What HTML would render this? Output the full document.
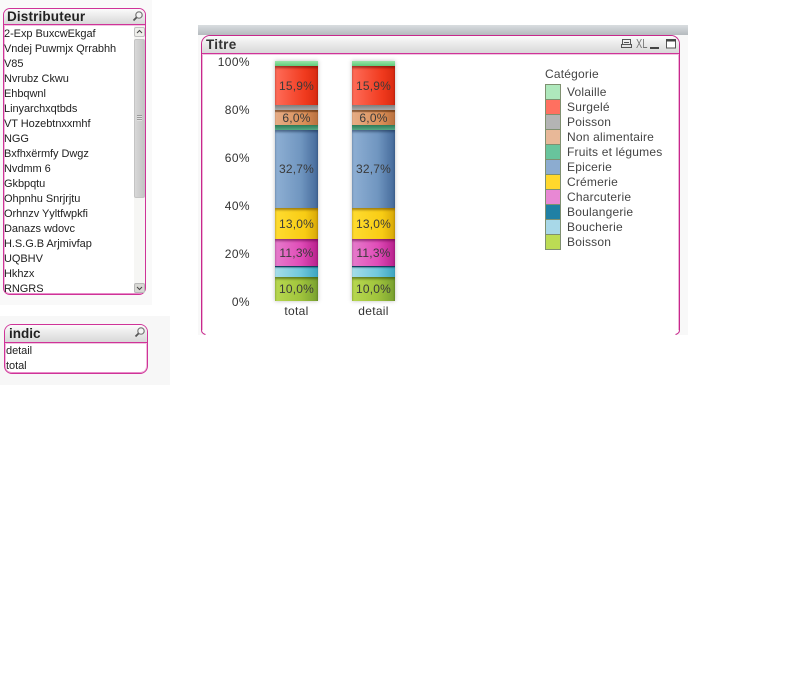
<!DOCTYPE html>
<html><head><meta charset="utf-8">
<style>
html,body{margin:0;padding:0;background:#fff;width:798px;height:675px;overflow:hidden}
body{position:relative;font-family:"Liberation Sans",sans-serif;color:#222}
.a{position:absolute}
.li{position:absolute;left:4px;font-size:11px;line-height:15px;white-space:nowrap;color:#222;letter-spacing:-.05px}
.cap{background:linear-gradient(#fbfbfb,#f0f0f0 30%,#d8d8d8);border-bottom:1px solid #cf3398;box-shadow:0 1px 0 #f0c4e0}
.box{position:absolute;border:1px solid #cf3398;box-sizing:border-box;box-shadow:inset 1px 0 0 #f0bcdc,inset -1px 0 0 #f0bcdc,inset 0 -1px 0 #e88cc8}
.seg{position:absolute;left:0;width:43px;box-sizing:border-box}
.pct{position:absolute;left:0;width:43px;text-align:center;font-size:12px;line-height:14px;color:#3a3a3a;letter-spacing:.2px}
.ax{position:absolute;width:34px;text-align:right;left:216px;font-size:12px;line-height:14px;color:#333;letter-spacing:.4px}
.sw{position:absolute;left:545px;width:16px;height:15px;box-sizing:border-box;border:1px solid #7f9070;border-width:1px 1px 0 1px}
.lg{position:absolute;left:567px;font-size:12px;line-height:14px;color:#444;letter-spacing:.2px;white-space:nowrap}
.bar{position:absolute;top:61px;width:43px;height:240px;box-shadow:0 0 4px rgba(90,90,90,.4)}
</style></head>
<body>
<div class="a" style="left:0;top:0;width:152px;height:305px;background:#f9f9f9"></div>
<div class="a" style="left:0;top:316px;width:170px;height:69px;background:#f7f7f7"></div>
<div class="a" style="left:198px;top:25px;width:490px;height:310px;background:#f8f8f8"></div>
<div class="a" style="left:198px;top:25px;width:490px;height:10px;background:linear-gradient(#d9dde0,#b5babe)"></div>

<!-- Distributeur -->
<div class="box" style="left:3px;top:8px;width:143px;height:287px;border-radius:7px;background:#fff;overflow:hidden">
<div class="cap" style="height:15px"></div>
</div>
<div class="a" style="left:7px;top:9px;font-size:13.5px;font-weight:bold;line-height:16px;color:#222;letter-spacing:.15px">Distributeur</div>
<svg class="a" style="left:131px;top:10px" width="13" height="13" viewBox="0 0 13 13"><circle cx="8" cy="5" r="3.2" fill="#f4f4f4" stroke="#777" stroke-width="1.2"/><path d="M5.600 7.400L2.500 10.500" stroke="#555" stroke-width="1.800"/></svg>
<div class="li" style="top:27px">2-Exp BuxcwEkgaf</div>
<div class="li" style="top:42px">Vndej Puwmjx Qrrabhh</div>
<div class="li" style="top:57px">V85</div>
<div class="li" style="top:72px">Nvrubz Ckwu</div>
<div class="li" style="top:87px">Ehbqwnl</div>
<div class="li" style="top:102px">Linyarchxqtbds</div>
<div class="li" style="top:117px">VT Hozebtnxxmhf</div>
<div class="li" style="top:132px">NGG</div>
<div class="li" style="top:147px">Bxfhxërmfy Dwgz</div>
<div class="li" style="top:162px">Nvdmm 6</div>
<div class="li" style="top:177px">Gkbpqtu</div>
<div class="li" style="top:192px">Ohpnhu Snrjrjtu</div>
<div class="li" style="top:207px">Orhnzv Yyltfwpkfi</div>
<div class="li" style="top:222px">Danazs wdovc</div>
<div class="li" style="top:237px">H.S.G.B Arjmivfap</div>
<div class="li" style="top:252px">UQBHV</div>
<div class="li" style="top:267px">Hkhzx</div>
<div class="li" style="top:282px;height:11px;overflow:hidden">RNGRS</div>
<!-- scrollbar -->
<div class="a" style="left:134px;top:26px;width:11px;height:267px;background:#f6f6f4"></div>
<div class="a" style="left:134px;top:27px;width:11px;height:10px;box-sizing:border-box;border:1px solid #c0c0c0;border-radius:2px;background:#eeeeea"></div>
<svg class="a" style="left:136px;top:29px" width="7" height="6"><path d="M1 4L3.500 1.500L6 4" fill="none" stroke="#444"/></svg>
<div class="a" style="left:134px;top:39px;width:11px;height:159px;box-sizing:border-box;border:1px solid #c4c4c4;border-radius:2px;background:linear-gradient(90deg,#d8d8d8,#c4c4c4)"></div>
<div class="a" style="left:137px;top:115px;width:5px;height:6px;background:repeating-linear-gradient(#9a9a9a 0 1px,#e0e0e0 1px 2px)"></div>
<div class="a" style="left:134px;top:283px;width:11px;height:10px;box-sizing:border-box;border:1px solid #b8b8b8;border-radius:2px;background:#d8d8d4"></div>
<svg class="a" style="left:136px;top:285px" width="7" height="6"><path d="M1 2L3.500 4.500L6 2" fill="none" stroke="#444"/></svg>

<!-- indic -->
<div class="box" style="left:4px;top:324px;width:144px;height:50px;border-radius:8px;background:#fff;overflow:hidden">
<div class="cap" style="height:17px"></div>
</div>
<div class="a" style="left:9px;top:326px;font-size:13.5px;font-weight:bold;line-height:16px;color:#222">indic</div>
<svg class="a" style="left:133px;top:326px" width="13" height="13" viewBox="0 0 13 13"><circle cx="8" cy="5" r="3.2" fill="#f4f4f4" stroke="#777" stroke-width="1.2"/><path d="M5.600 7.400L2.500 10.500" stroke="#555" stroke-width="1.800"/></svg>
<div class="li" style="left:6px;top:344px">detail</div>
<div class="li" style="left:6px;top:359px">total</div>

<!-- chart box -->
<div class="a" style="left:201px;top:35px;width:479px;height:300px;box-sizing:border-box;border:1px solid #c8288c;border-bottom:0;border-radius:9px 9px 0 0;background:#fff;overflow:hidden;box-shadow:inset 1px 0 0 #eeb4d8,inset -1px 0 0 #eeb4d8">
<div class="cap" style="height:17px"></div>
</div>
<div class="a" style="left:201px;top:330px;width:2px;height:5px;background:#f8f8f8"></div>
<div class="a" style="left:678px;top:330px;width:2px;height:5px;background:#f8f8f8"></div>
<svg class="a" style="left:201px;top:329px" width="479" height="6"><path d="M.5 0V1Q.5 4.500 4.500 5.500M478.500 0V1Q478.500 4.500 474.500 5.500" fill="none" stroke="#c8288c"/></svg>
<div class="a" style="left:206px;top:37px;font-size:13.5px;font-weight:bold;line-height:16px;color:#333;letter-spacing:.3px">Titre</div>
<svg class="a" style="left:620px;top:37px" width="60" height="14">
<path d="M2.500 2.500H10.500V7.500H2.500ZM4 5.500H9M1.500 10.500H11.500V7.500H1.500Z" fill="none" stroke="#555"/>
<path d="M30 11H39" stroke="#444" stroke-width="2"/>
<rect x="46.500" y="2.500" width="9" height="8.500" fill="#fff" stroke="#555"/><path d="M46 3.500H56" stroke="#444" stroke-width="2"/>
</svg>
<div class="a" style="left:636px;top:37px;font-size:13px;line-height:14px;color:#777;transform:scaleX(.72);transform-origin:left">XL</div>

<!-- axis -->
<div class="ax" style="top:55px">100%</div>
<div class="ax" style="top:103px">80%</div>
<div class="ax" style="top:151px">60%</div>
<div class="ax" style="top:199px">40%</div>
<div class="ax" style="top:247px">20%</div>
<div class="ax" style="top:295px">0%</div>

<!-- bars -->
<div class="bar" style="left:275px">
<div class="seg" style="top:0;height:5px;background:linear-gradient(#98e4a8,#5fcb7a)"></div>
<div class="seg" style="top:5px;height:39px;background:linear-gradient(90deg,#ff6d5a,#f03a1e 70%,#d82a10);box-shadow:inset 0 2px 2px rgba(90,0,0,.55)"></div>
<div class="seg" style="top:44px;height:5px;background:linear-gradient(#7e7e7e,#a8a8a8)"></div>
<div class="seg" style="top:49px;height:15px;background:linear-gradient(90deg,#e6ad86,#d88d56 70%,#b8703e);box-shadow:inset 0 2px 1px rgba(70,30,0,.55)"></div>
<div class="seg" style="top:64px;height:5px;background:linear-gradient(#2c7a58,#56a884)"></div>
<div class="seg" style="top:69px;height:78px;background:linear-gradient(90deg,#8fb0d4,#7096c0 60%,#44699a);box-shadow:inset 0 2px 2px rgba(20,40,70,.5)"></div>
<div class="seg" style="top:147px;height:31px;background:linear-gradient(90deg,#ffdc30,#f8cc14 70%,#d8a808);box-shadow:inset 0 2px 2px rgba(90,60,0,.55)"></div>
<div class="seg" style="top:178px;height:27px;background:linear-gradient(90deg,#e67ccc,#e04cb8 60%,#b8208c);box-shadow:inset 0 2px 2px rgba(80,0,60,.55)"></div>
<div class="seg" style="top:205px;height:1px;background:#14405e"></div>
<div class="seg" style="top:206px;height:10px;background:linear-gradient(90deg,#a6dde8,#70c8dc 60%,#3ca4c0);box-shadow:inset 0 1px 1px rgba(0,40,60,.4)"></div>
<div class="seg" style="top:216px;height:24px;background:linear-gradient(90deg,#b8d850,#a0c43c 60%,#78a030);box-shadow:inset 0 2px 2px rgba(40,60,0,.55)"></div>
<div class="pct" style="top:18px">15,9%</div>
<div class="pct" style="top:50px">6,0%</div>
<div class="pct" style="top:101px">32,7%</div>
<div class="pct" style="top:156px">13,0%</div>
<div class="pct" style="top:185px">11,3%</div>
<div class="pct" style="top:221px">10,0%</div>
</div>
<div class="bar" style="left:352px">
<div class="seg" style="top:0;height:5px;background:linear-gradient(#98e4a8,#5fcb7a)"></div>
<div class="seg" style="top:5px;height:39px;background:linear-gradient(90deg,#ff6d5a,#f03a1e 70%,#d82a10);box-shadow:inset 0 2px 2px rgba(90,0,0,.55)"></div>
<div class="seg" style="top:44px;height:5px;background:linear-gradient(#7e7e7e,#a8a8a8)"></div>
<div class="seg" style="top:49px;height:15px;background:linear-gradient(90deg,#e6ad86,#d88d56 70%,#b8703e);box-shadow:inset 0 2px 1px rgba(70,30,0,.55)"></div>
<div class="seg" style="top:64px;height:5px;background:linear-gradient(#2c7a58,#56a884)"></div>
<div class="seg" style="top:69px;height:78px;background:linear-gradient(90deg,#8fb0d4,#7096c0 60%,#44699a);box-shadow:inset 0 2px 2px rgba(20,40,70,.5)"></div>
<div class="seg" style="top:147px;height:31px;background:linear-gradient(90deg,#ffdc30,#f8cc14 70%,#d8a808);box-shadow:inset 0 2px 2px rgba(90,60,0,.55)"></div>
<div class="seg" style="top:178px;height:27px;background:linear-gradient(90deg,#e67ccc,#e04cb8 60%,#b8208c);box-shadow:inset 0 2px 2px rgba(80,0,60,.55)"></div>
<div class="seg" style="top:205px;height:1px;background:#14405e"></div>
<div class="seg" style="top:206px;height:10px;background:linear-gradient(90deg,#a6dde8,#70c8dc 60%,#3ca4c0);box-shadow:inset 0 1px 1px rgba(0,40,60,.4)"></div>
<div class="seg" style="top:216px;height:24px;background:linear-gradient(90deg,#b8d850,#a0c43c 60%,#78a030);box-shadow:inset 0 2px 2px rgba(40,60,0,.55)"></div>
<div class="pct" style="top:18px">15,9%</div>
<div class="pct" style="top:50px">6,0%</div>
<div class="pct" style="top:101px">32,7%</div>
<div class="pct" style="top:156px">13,0%</div>
<div class="pct" style="top:185px">11,3%</div>
<div class="pct" style="top:221px">10,0%</div>
</div>
<div class="a" style="left:275px;top:304px;width:43px;text-align:center;font-size:12px;line-height:14px;color:#333;letter-spacing:.3px">total</div>
<div class="a" style="left:352px;top:304px;width:43px;text-align:center;font-size:12px;line-height:14px;color:#333;letter-spacing:.3px">detail</div>

<!-- legend -->
<div class="a" style="left:545px;top:67px;font-size:12px;line-height:14px;color:#444;letter-spacing:.2px">Catégorie</div>
<div class="sw" style="top:84px;background:#aee8bc"></div><div class="lg" style="top:85px">Volaille</div>
<div class="sw" style="top:99px;background:#ff7060"></div><div class="lg" style="top:100px">Surgelé</div>
<div class="sw" style="top:114px;background:#b4b4b4"></div><div class="lg" style="top:115px">Poisson</div>
<div class="sw" style="top:129px;background:#e8b898"></div><div class="lg" style="top:130px">Non alimentaire</div>
<div class="sw" style="top:144px;background:#68c49c"></div><div class="lg" style="top:145px">Fruits et légumes</div>
<div class="sw" style="top:159px;background:#8cacd0"></div><div class="lg" style="top:160px">Epicerie</div>
<div class="sw" style="top:174px;background:#ffd82c"></div><div class="lg" style="top:175px">Crémerie</div>
<div class="sw" style="top:189px;background:#e888d4"></div><div class="lg" style="top:190px">Charcuterie</div>
<div class="sw" style="top:204px;background:#2080a4"></div><div class="lg" style="top:205px">Boulangerie</div>
<div class="sw" style="top:219px;background:#a8d8e8"></div><div class="lg" style="top:220px">Boucherie</div>
<div class="sw" style="top:234px;height:16px;border-bottom-width:1px;background:#bcdc54"></div><div class="lg" style="top:235px">Boisson</div>
</body></html>
